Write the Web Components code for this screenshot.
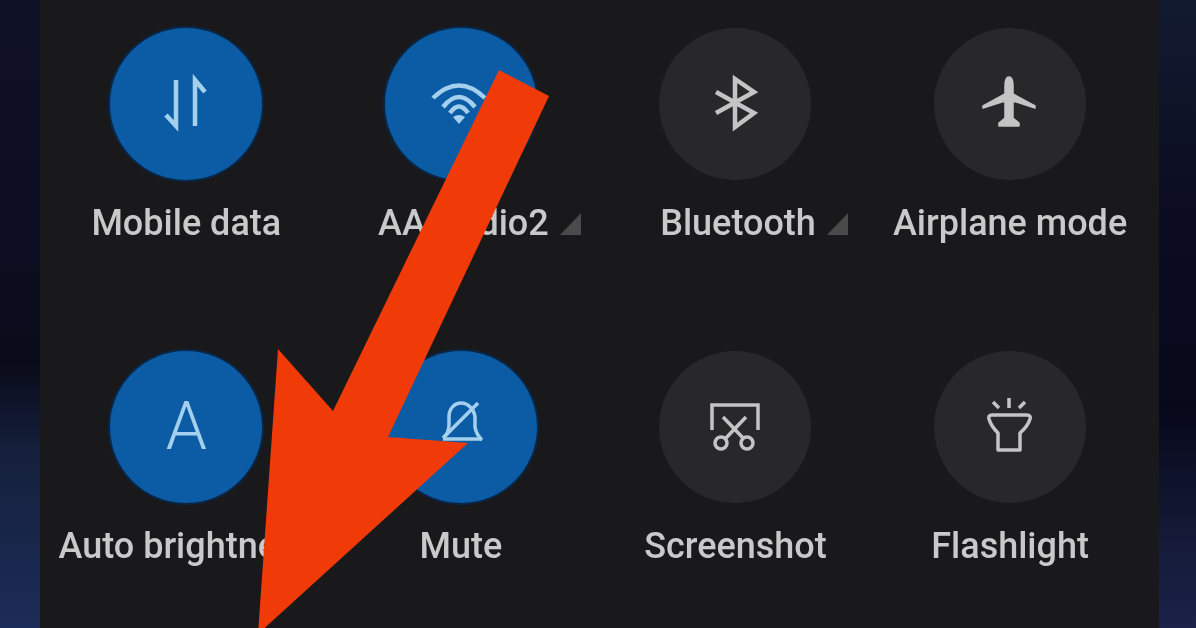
<!DOCTYPE html>
<html>
<head>
<meta charset="utf-8">
<title>Quick settings</title>
<style>
    html, body { margin: 0; height: 100%; background: #0a0a18; overflow: hidden; }
</style>
</head>
<body>
<phone-screen>
    <quick-panel>
        <quick-tile label="Mobile data" on>
            <svg viewBox="0 0 152 152" fill="none" stroke="currentColor" stroke-width="4.5"><path d="M66 52V98L56 87M85 98V52L95 64"/></svg>
        </quick-tile>
        <quick-tile label="AA Audio2" on more>
            <svg viewBox="0 0 152 152" fill="none" stroke="currentColor" stroke-width="4.5"><path d="M48 70Q74 45 100 70M58 79Q74 59 90 79"/><path d="M65 85Q74 72 83 85"/><path d="M74 96L68 89Q74 85 80 89Z" fill="currentColor" stroke="none"/></svg>
        </quick-tile>
        <quick-tile label="Bluetooth" more>
            <svg viewBox="0 0 152 152" fill="none" stroke="currentColor" stroke-width="4.5"><path d="M57 64L95 85L76 99V51L95 64L57 85"/></svg>
        </quick-tile>
        <quick-tile label="Airplane mode">
            <svg viewBox="0 0 152 152" fill="currentColor" stroke="currentColor" stroke-width="1.5" stroke-linejoin="round"><path d="M75 49C78 49 79 53 79 58V66L101 78V80L79 73V90L85 95V98H65V95L71 90V73L49 80V78L71 66V58C71 53 72 49 75 49Z"/></svg>
        </quick-tile>
        <quick-tile label="Auto brightness" on>
            <span class="letter">A</span>
        </quick-tile>
        <quick-tile label="Mute" on>
            <svg viewBox="0 0 152 152" fill="none" stroke="currentColor" stroke-width="3.5" stroke-linejoin="round"><path d="M58 87Q64 82 64 74V66C64 57 70 52 76 52C83 52 89 58 90 66V76Q91 83 97 89"/><path d="M58 88H97"/><path d="M93 52L58 87"/></svg>
        </quick-tile>
        <quick-tile label="Screenshot">
            <svg viewBox="0 0 152 152" fill="none" stroke="currentColor" stroke-width="3.5"><path d="M53 79V54H99V79"/><path d="M64 66L85 88M87 66L66 88"/><circle cx="62" cy="92" r="6"/><circle cx="88" cy="92" r="6"/></svg>
        </quick-tile>
        <quick-tile label="Flashlight">
            <svg viewBox="0 0 152 152" fill="none" stroke="currentColor" stroke-width="3.5" stroke-linejoin="round"><path d="M58 64H93Q97 64 96 68Q94 75 86 82V99H64V82Q57 75 55 68Q54 64 58 64Z"/><path d="M75 47V57M59 51L65 57M91 51L85 57"/></svg>
        </quick-tile>
    </quick-panel>
    <arrow-mark></arrow-mark>
</phone-screen>

<script>
const tileLabelColor = '#c9c9c9'

class PhoneScreen extends HTMLElement {
    constructor() {
        super()
        const shadowRoot = this.attachShadow({mode: 'open'})
        shadowRoot.innerHTML = `
            <style>
                :host {
                    display: flex;
                    position: relative;
                    width: 1196px;
                    height: 628px;
                    overflow: hidden;
                    padding: 0 37px 0 40px;
                    box-sizing: border-box;
                    background:
                        linear-gradient(180deg, #0f1126 0%, #0c0d20 40%, #0a0b1a 58%, #14203c 72%, #1c2c58 100%) left / 40px 100% no-repeat,
                        linear-gradient(180deg, #121a30 0%, #0b0c20 35%, #07081a 65%, #141a36 85%, #1b2148 100%) right / 37px 100% no-repeat;
                }
            </style>
            <slot></slot>
        `
    }
}

class QuickPanel extends HTMLElement {
    constructor() {
        super()
        const shadowRoot = this.attachShadow({mode: 'open'})
        shadowRoot.innerHTML = `
            <style>
                :host {
                    flex: 1;
                    display: grid;
                    grid-template-columns: repeat(4, 274.6px);
                    grid-auto-rows: 323px;
                    align-content: start;
                    padding: 28px 0 0 9px;
                    background: #19191b;
                }
            </style>
            <slot></slot>
        `
    }
}

class QuickTile extends HTMLElement {
    constructor() {
        super()
        const shadowRoot = this.attachShadow({mode: 'open'})
        const label = this.getAttribute('label')
        shadowRoot.innerHTML = `
            <style>
                :host {
                    display: flex;
                    flex-direction: column;
                    align-items: center;
                    font-family: Roboto, "Liberation Sans", sans-serif;
                }
                #circle {
                    width: 152px;
                    height: 152px;
                    border-radius: 50%;
                    display: flex;
                    align-items: center;
                    justify-content: center;
                    background: #28282a;
                    color: #c4c4c4;
                    font-family: Roboto, sans-serif;
                    font-weight: 300;
                    font-size: 66px;
                    line-height: 1;
                }
                :host([on]) #circle {
                    background: #0b5ba5;
                    color: #a4d0ee;
                    box-shadow: 0 0 1px 2px #0a2748;
                }
                ::slotted(svg) {
                    width: 152px;
                    height: 152px;
                    display: block;
                    filter: blur(0.4px);
                }
                #label {
                    position: relative;
                    margin-top: 23px;
                    font-size: 36px;
                    line-height: 40px;
                    font-weight: 500;
                    color: ${tileLabelColor};
                    white-space: nowrap;
                    filter: blur(0.6px);
                }
                :host([more]) #label {
                    margin-left: 5px;
                }
                #more {
                    display: none;
                    position: absolute;
                    left: 100%;
                    top: 10px;
                    margin-left: 11px;
                    width: 0;
                    height: 0;
                    border-left: 21px solid transparent;
                    border-bottom: 22px solid #4a4a4a;
                }
                :host([more]) #more {
                    display: block;
                }
            </style>
            <div id="circle"><slot></slot></div>
            <div id="label">${label}<span id="more"></span></div>
        `
    }
}

class ArrowMark extends HTMLElement {
    constructor() {
        super()
        const shadowRoot = this.attachShadow({mode: 'open'})
        shadowRoot.innerHTML = `
            <style>
                :host {
                    position: absolute;
                    inset: 0;
                    display: block;
                    pointer-events: none;
                }
                svg {
                    width: 100%;
                    height: 100%;
                    display: block;
                }
            </style>
            <svg viewBox="0 0 1196 628">
                <polygon fill="#f03a08" points="499,70 549,96 388,437 468,443 258,634 278,349 333,411"/>
            </svg>
        `
    }
}

customElements.define('phone-screen', PhoneScreen)
customElements.define('quick-panel', QuickPanel)
customElements.define('quick-tile', QuickTile)
customElements.define('arrow-mark', ArrowMark)
</script>
</body>
</html>
